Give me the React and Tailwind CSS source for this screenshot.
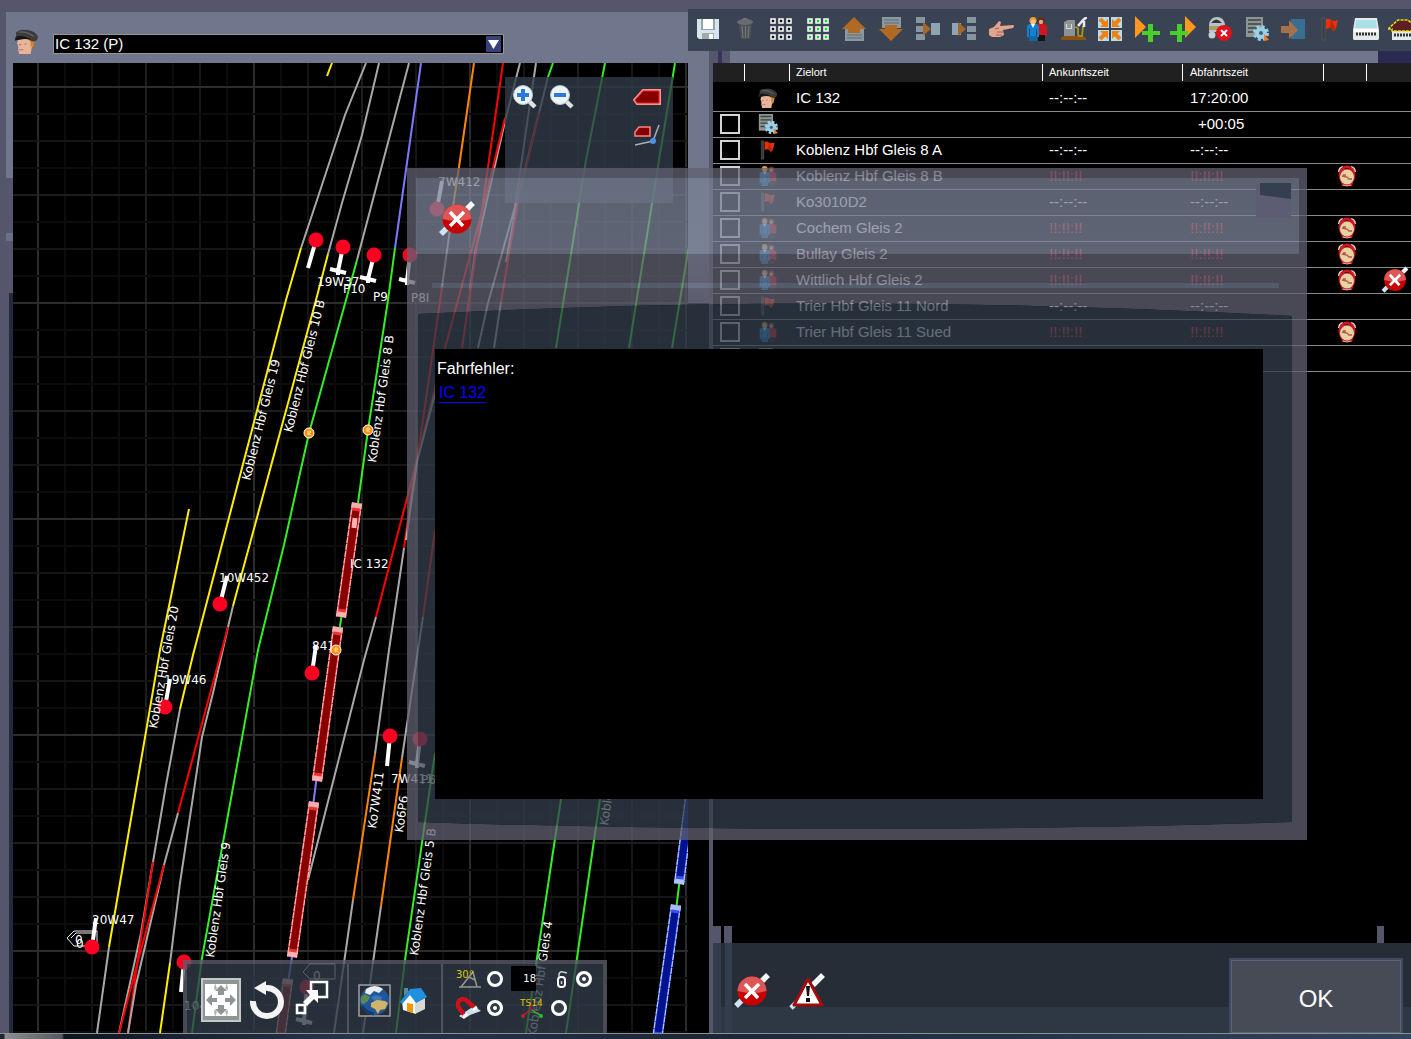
import { useState } from 'react';

const GREEN = '#33ee22';
const GRAY = '#a8a8a8';
const YELLOW = '#ffee00';
const RED = '#ff0000';
const ORANGE = '#ff8400';
const BLUE = '#7b7bff';

const TRACKS = [
  [YELLOW, '332,63 327,76'],
  [GRAY, '366,63 345,115 317,200 301,248'],
  [YELLOW, '301,248 286,300 193,655 180,709'],
  [GRAY, '180,709 166,785 153,862 141,933 119,1033'],
  [RED, '153,862 141,938 136,972 128,1033'],
  [GRAY, '379,63 362,135 342,203 328,254'],
  [YELLOW, '328,254 316,300 233,606'],
  [GRAY, '233,606 228,627 213,693 202,737 180,883 170,963'],
  [YELLOW, '170,963 160,1033'],
  [GRAY, '178,813 164,865 136,985 128,1033'],
  [RED, '228,627 178,813'],
  [RED, '164,865 135,972 119,1033'],
  [GRAY, '409,63 357,260'],
  [GREEN, '357,260 346,300 309,433 284,545 258,650 202,958 192,1033'],
  [BLUE, '421,63 395,248'],
  [GREEN, '395,248 388,300 368,430 358,503 338,640'],
  [BLUE, '317,775 313,806'],
  [BLUE, '293,950 287,990'],
  [ORANGE, '474,63 459,167 454,200'],
  [GRAY, '454,200 442,287'],
  [RED, '442,287 423,420'],
  [GRAY, '520,63 506,117 490,187 475,253 470,290'],
  [RED, '503,63 488,167 477,245 462,348'],
  [RED, '505,118 493,167 481,215 445,348 417,460 376,617'],
  [GRAY, '376,617 364,660 320,833 308,880'],
  [RED, '423,420 412,490 404,548'],
  [GRAY, '436,390 417,462 406,540'],
  [GRAY, '404,548 389,650 375,754'],
  [ORANGE, '375,754 353,900'],
  [GRAY, '353,900 334,1033'],
  [RED, '435,530 423,617'],
  [GRAY, '423,617 418,650 402,758'],
  [ORANGE, '402,758 381,906'],
  [GRAY, '381,906 363,1033'],
  [GRAY, '536,63 528,117 515,207 488,303 478,348'],
  [GREEN, '553,63 548,77'],
  [GRAY, '548,77 539,113 528,157 516,207 506,262'],
  [RED, '539,113 528,160 517,207 501,302'],
  [GRAY, '501,302 494,348'],
  [GREEN, '605,63 586,160 556,348'],
  [GREEN, '675,63 659,160 629,348'],
  [GREEN, '690,240 672,348'],
  [GREEN, '561,799 537,958 526,1033'],
  [GREEN, '600,799 577,958 566,1033'],
  [GREEN, '435,753 405,960 396,1033'],
  [YELLOW, '189,509 160,650 109,947'],
  [GRAY, '109,947 97,1033'],
  [GREEN, '680,878 676,910'],
];

const CARS = [
  [357, 503, 341, 617, 'red'],
  [338, 627, 317, 781, 'red'],
  [314, 802, 292, 957, 'red'],
  [288, 979, 280, 1040, 'red'],
  [691, 790, 679, 884, 'blue'],
  [676, 905, 657, 1040, 'blue'],
];

// x, y of the lamp, x, y of the mast foot, crossbar
const SIGNALS = [
  [316, 240, 308, 268, false],
  [343, 247, 338, 271, true],
  [374, 255, 368, 279, true],
  [410, 255, 407, 281, true],
  [437, 209, 442, 181, false],
  [220, 604, 227, 576, false],
  [312, 673, 316, 645, false],
  [165, 707, 170, 679, false],
  [92, 947, 96, 918, false],
  [390, 736, 387, 766, false],
  [420, 739, 417, 764, true],
  [184, 962, 181, 992, false],
  [307, 987, 304, 1021, true],
];

const LABELS = [
  ['19W37', 317, 286, 0],
  ['P10', 343, 293, 0],
  ['P9', 373, 301, 0],
  ['P8I', 411, 302, 0],
  ['7W412', 438, 186, 0],
  ['IC 132', 350, 568, 0],
  ['10W452', 219, 582, 0],
  ['841', 312, 650, 0],
  ['19W46', 164, 684, 0],
  ['20W47', 92, 924, 0],
  ['7W411', 391, 783, 0],
  ['P6', 421, 784, 0],
  ['1045', 184, 1010, 0],
  ['Koblenz Hbf Gleis 19', 250, 481, -76],
  ['Koblenz Hbf Gleis 10 B', 292, 433, -76],
  ['Koblenz Hbf Gleis 8 B', 376, 463, -82],
  ['Koblenz Hbf Gleis 20', 157, 729, -80],
  ['Koblenz Hbf Gleis 9', 214, 958, -82],
  ['Koblenz Hbf Gleis 5 B', 418, 956, -82],
  ['Ko7W411', 376, 829, -82],
  ['Ko6P6', 403, 833, -82],
  ['Koblenz Hbf Gleis 4', 536, 1037, -82],
  ['Koblenz Hbf Gleis 3', 608, 826, -82],
];

const STOPS = [
  { icon: 'driver', name: 'IC 132', arr: '--:--:--', dep: '17:20:00', head: true },
  { icon: 'task', name: '', arr: '', dep: '+00:05', indent: true },
  { icon: 'flag', name: 'Koblenz Hbf Gleis 8 A', arr: '--:--:--', dep: '--:--:--' },
  { icon: 'people', name: 'Koblenz Hbf Gleis 8 B', arr: '!!:!!:!!', dep: '!!:!!:!!', alarm: true },
  { icon: 'flag', name: 'Ko3010D2', arr: '--:--:--', dep: '--:--:--' },
  { icon: 'people', name: 'Cochem Gleis 2', arr: '!!:!!:!!', dep: '!!:!!:!!', alarm: true },
  { icon: 'people', name: 'Bullay Gleis 2', arr: '!!:!!:!!', dep: '!!:!!:!!', alarm: true },
  { icon: 'people', name: 'Wittlich Hbf Gleis 2', arr: '!!:!!:!!', dep: '!!:!!:!!', alarm: true, error: true },
  { icon: 'flag', name: 'Trier Hbf Gleis 11 Nord', arr: '--:--:--', dep: '--:--:--' },
  { icon: 'people', name: 'Trier Hbf Gleis 11 Sued', arr: '!!:!!:!!', dep: '!!:!!:!!', alarm: true },
  { icon: 'task', name: '', arr: '', dep: '' },
];

function DriverIcon({ className = 'size-6' }) {
  return (
    <svg className={className} viewBox="0 0 24 24">
      <path d="M12 9l8 3-1 5-3 3z" fill="#b87410" />
      <path d="M4 9l-1 5 1 2v4l1 4h11l1-6 2-4-1-5-6-2z" fill="#e8b49a" />
      <path d="M14 10l2 3v5l2-3 2-3-1-2z" fill="#c98322" />
      <path d="M5 15h2M10 15l2-1M5 20h4" stroke="#b57a62" strokeWidth="1" />
      <path d="M2 3Q6 0 13 1t10 6q0 5-5 5-5-4-11-3L1 11q-1-2 1-4z" fill="#3c3c3c" />
      <path d="M3 7q8-1 14 4-6-2-10-1L1 11q0-2 2-4z" fill="#161616" />
      <path d="M5 3q7-1 14 4" stroke="#6a6a6a" fill="none" />
    </svg>
  );
}

function FlagIcon({ className = 'size-6' }) {
  return (
    <svg className={className} viewBox="0 0 24 24">
      <path d="M4 1h3v22H4z" fill="#3c3c3c" stroke="#606060" strokeWidth=".6" />
      <path d="M8 2q3-1 5 1t7 0l-2 8q-1 3-3 3-2-4-4-3l-3 1z" fill="#e8300a" />
      <path d="M13 3l-1 8q2 0 3 3l2-3z" fill="#b82406" />
    </svg>
  );
}

function PeopleIcon({ className = 'size-6' }) {
  return (
    <svg className={className} viewBox="0 0 24 24">
      <circle cx="16" cy="4" r="3.500" fill="#6b2a10" />
      <circle cx="16" cy="5" r="2.200" fill="#e2a583" />
      <path d="M11 7h8l3 2v10h-11z" fill="#d01420" />
      <path d="M13 18h7v6h-7z" fill="#151515" />
      <circle cx="8" cy="3.500" r="3.500" fill="#f0a028" />
      <circle cx="8" cy="5" r="2.500" fill="#f2c19c" />
      <path d="M4 7h8l2 2v11H2V9z" fill="#1680cc" />
      <path d="M6 7l2 4 2-4z" fill="#fff" />
      <path d="M4 19h8v5H4z" fill="#1268a8" />
      <path d="M4.500 12v7M11.500 12v7" stroke="#0a5288" />
    </svg>
  );
}

function TaskIcon({ className = 'size-6' }) {
  return (
    <svg className={className} viewBox="0 0 24 24">
      <path d="M1 0h17v20H1z" fill="#8d9593" />
      <path d="M3 3h13M3 7h13M3 11h10M3 15h6" stroke="#3b4444" strokeWidth="1.600" />
      <circle cx="16" cy="16" r="6" fill="#9bd0e6" />
      <circle cx="16" cy="16" r="6" fill="none" stroke="#9bd0e6" strokeWidth="4" strokeDasharray="2.700 2" />
      <circle cx="16" cy="16" r="2" fill="#47626e" />
      <path d="M19 17l5 6-5 1z" fill="#f08020" />
    </svg>
  );
}

const ROW_ICONS = { driver: DriverIcon, task: TaskIcon, flag: FlagIcon, people: PeopleIcon };

function AlarmIcon() {
  return (
    <svg className="ml-[14px] h-[22px] w-5" viewBox="0 0 20 22">
      <path d="M2 7q0-4 4-5M18 7q0-4-4-5" stroke="#d8d0d0" strokeWidth="2" fill="none" />
      <path d="M3 14l2 7h10l2-7z" fill="#c81820" />
      <ellipse cx="10" cy="10" rx="8.500" ry="9.500" fill="#d01820" />
      <path d="M7 4q3-2 6 0z" fill="#401010" />
      <ellipse cx="10" cy="12" rx="7" ry="7.600" fill="#e6d2a2" />
      <path d="M5 11l5 1 2 2h3M6 10h3" stroke="#b0584a" strokeWidth="1.300" fill="none" />
      <path d="M6 20q4 2 8 0" stroke="#e6b0a0" fill="none" />
    </svg>
  );
}

function ErrorIcon({ className = 'size-10' }) {
  return (
    <svg className={className} viewBox="0 0 40 40">
      <path d="M4 35l8-8" stroke="#cfe4f0" strokeWidth="5.500" />
      <path d="M28 12l8-8" stroke="#f4f6f7" strokeWidth="5.500" />
      <circle cx="20" cy="20" r="14.500" fill="#c80000" />
      <path d="M5.500 20a14.500 14.500 0 0 1 29 0q-14 4-29 0z" fill="#dd5555" />
      <path d="M13 13l13 14M27 13L13 27" stroke="#fff" strokeWidth="3.500" />
    </svg>
  );
}

function WarnIcon() {
  return (
    <svg className="size-10" viewBox="0 0 40 40">
      <path d="M3 37l6-6" stroke="#cfe4f0" strokeWidth="5" />
      <path d="M25 14L35 4" stroke="#f4f6f7" strokeWidth="5.500" />
      <path d="M20 8L34 34H6z" fill="#fff" stroke="#a00c0c" strokeWidth="3" strokeLinejoin="round" />
      <path d="M18 15h4l-1 10h-2zM18 27h4v4h-4z" fill="#111" />
    </svg>
  );
}

const CELLS = [1, 9, 17];

function GridIcon({ fill }) {
  return (
    <svg className="size-6" viewBox="0 0 24 24">
      {CELLS.map((y) =>
        CELLS.map((x) => (
          <rect key={`${x}-${y}`} x={x + 1} y={y + 1} width="4" height="4" fill={fill} stroke="#f4f4f4" strokeWidth="1.600" />
        ))
      )}
    </svg>
  );
}

const TOOLS = [
  ['Speichern', <svg className="size-6" viewBox="0 0 24 24"><path d="M1 2h22v20H3l-2-2z" fill="#d5e6ee" /><path d="M5 2h14v11H5z" fill="#9aa4a8" /><path d="M7 2h10v10H7z" fill="#fff" /><path d="M6 16h12v6H6z" fill="#a2a9ac" /><path d="M13 17h4v5h-4z" fill="#fff" /></svg>],
  ['Löschen', <svg className="size-6" viewBox="0 0 24 24"><path d="M6 6h13l-1 15q-6 3-11 0z" fill="#4b4f53" /><ellipse cx="12" cy="5" rx="8" ry="3" fill="#686c70" /><path d="M9 3q3-3 6 0" stroke="#777" fill="none" strokeWidth="1.500" /><path d="M9 9l1 12M12.500 9v12M16 9l-1 12" stroke="#73787c" strokeWidth="1.200" /></svg>],
  ['Alle abwählen', <GridIcon fill="#111" />],
  ['Alle auswählen', <GridIcon fill="#00e020" />],
  ['Nach oben', <svg className="size-6" viewBox="0 0 24 24"><path d="M3 12h19v12H3z" fill="#8b98a2" /><path d="M5 18h15M5 21h15" stroke="#5f6c76" /><path d="M12 0l12 12h-6v4H6v-4H0z" fill="#b06a22" /></svg>],
  ['Nach unten', <svg className="size-6" viewBox="0 0 24 24"><path d="M3 0h19v11H3z" fill="#8b98a2" /><path d="M5 3h15M5 6h15" stroke="#5f6c76" /><path d="M12 24L0 12h6V8h12v4h6z" fill="#b06a22" /></svg>],
  ['Zusammenfassen', <svg className="size-6" viewBox="0 0 24 24"><path d="M0 0h9v6H0zM0 9h9v6H0zM0 17h9v6H0z" fill="#8795a1" /><path d="M15 6h9v12h-9z" fill="#8fa4b2" /><path d="M7 5l8 7-8 7z" fill="#a5662a" /></svg>],
  ['Aufteilen', <svg className="size-6" viewBox="0 0 24 24"><path d="M15 0h9v6h-9zM15 9h9v6h-9zM15 17h9v6h-9z" fill="#8795a1" /><path d="M0 6h9v12H0z" fill="#8fa4b2" /><path d="M6 5l8 7-8 7z" fill="#a5662a" /></svg>],
  ['Ziel zeigen', <svg className="h-6 w-[26px]" viewBox="0 0 26 24"><path d="M1 12l5-2 5-6 2 1-1 4 13-1q2 1 0 3l-10 2 1 5-4 2H4l-3-2z" fill="#e2a58e" /><path d="M9 15h6M8 18h6M7 12l4-1" stroke="#a8604c" /></svg>],
  ['Fahrgäste', <PeopleIcon />],
  ['Tanken', <svg className="h-6 w-[26px]" viewBox="0 0 26 24"><path d="M3 5l4-2h7v17H3z" fill="#8d9294" /><path d="M5 7h6v5H5z" fill="#d8dcdc" /><path d="M6 8h4M6 10h4" stroke="#555" /><path d="M0 21l3-2h19l3 2v2H0z" fill="#8a5410" /><path d="M14 10q4 0 3 5t4 4l1-10" stroke="#b39a12" strokeWidth="1.700" fill="none" /><path d="M17 9l5-6M22 3l4-3M23 4v6" stroke="#e8edf0" strokeWidth="2.500" /></svg>],
  ['Vollbild', <svg className="size-6" viewBox="0 0 24 24"><path d="M0 0h11v11H0zM13 0h11v11H13zM0 13h11v11H0zM13 13h11v11H13z" fill="#b9dce8" /><path d="M2 2l6 6M22 2l-6 6M2 22l6-6M22 22l-6-6" stroke="#f08010" strokeWidth="4" /><path d="M10 2v8H2zM14 2v8h8zM10 22v-8H2zM14 22v-8h8z" fill="#f08010" /></svg>],
  ['Danach einfügen', <svg className="h-[26px] w-[26px]" viewBox="0 0 26 26"><path d="M1 0l11 11L1 22z" fill="#ff981c" /><path d="M14 8h5v7h7v4h-7v7h-5v-7H8v-4h6z" fill="#48cf28" /></svg>],
  ['Davor einfügen', <svg className="h-[26px] w-[26px]" viewBox="0 0 26 26"><path d="M15 0l11 11-11 11z" fill="#ff981c" /><path d="M7 8h5v7h6v4h-6v7H7v-7H0v-4h7z" fill="#48cf28" /></svg>],
  ['Signal sperren', <svg className="h-6 w-[26px]" viewBox="0 0 26 24"><path d="M2 8q1-8 8-8t8 8v7H2z" fill="#b9c4ca" /><path d="M4 6q5-7 11 0z" fill="#2e383f" /><path d="M2 9h14v4H2z" fill="#a8a060" /><circle cx="5" cy="18" r="3.500" fill="#c5ced4" /><circle cx="17" cy="16" r="8" fill="#e2101c" /><path d="M14 13l6 6M20 13l-6 6" stroke="#fff" strokeWidth="2" /></svg>],
  ['Aufgabe', <TaskIcon />],
  ['Einfahren', <svg className="size-6" viewBox="0 0 24 24"><path d="M10 2h14v20H10z" fill="#386e90" /><path d="M0 9h8V3l9 10-9 9v-6H0z" fill="#a5704a" /></svg>],
  ['Flagge', <FlagIcon />],
  ['Wagen', <svg className="h-6 w-[26px]" viewBox="0 0 26 24"><path d="M2 1h22l2 12v9l-1 1H1l-1-1v-9z" fill="#e5e9ea" /><path d="M3 3h20l1 8H2z" fill="#a9e0e8" /><path d="M1 12h24v3H1z" fill="#fff" /><path d="M3 17h20" stroke="#333" strokeWidth="3" strokeDasharray="2 1" /></svg>],
  ['Depot', <svg className="h-6 w-[30px]" viewBox="0 0 30 24"><path d="M4 13h22v10H4z" fill="#e5e9ea" /><path d="M6 18h18" stroke="#333" strokeWidth="3" strokeDasharray="2 1" /><path d="M0 12L10 3h10l10 9h-4v2H4v-2z" fill="#5c2020" stroke="#e8d818" strokeWidth="1.500" strokeDasharray="3 1" /></svg>],
];

function Car({ car }) {
  const [x1, y1, x2, y2, kind] = car;
  const red = kind === 'red';
  const light = red ? '#ffb0b0' : '#b0c4ff';
  const mid = red ? '#f03030' : '#3050ff';
  const len = Math.hypot(x2 - x1, y2 - y1);
  const angle = (Math.atan2(y2 - y1, x2 - x1) * 180) / Math.PI;
  return (
    <g transform={`translate(${x1} ${y1}) rotate(${angle})`}>
      <rect y="-5" width={len} height="10" fill={mid} />
      <path d={`M0 -4.500H${len}M0 4.500H${len}`} stroke={light} strokeWidth="1.300" strokeDasharray="6 1" />
      <rect x="8" y="-3.500" width={len - 16} height="7" fill={red ? '#860000' : '#00128e'} />
      <rect y="-5" width="5" height="10" fill={red ? '#e8b0b0' : '#b0b8f0'} />
      <rect x={len - 5} y="-5" width="5" height="10" fill={light} />
    </g>
  );
}

function gridColor(i) {
  if (i % 8 === 0) return '#2c2c2c';
  if (i % 4 === 0) return '#1e1e1e';
  return i % 2 === 0 ? '#151515' : '#0c0c0c';
}

function TrackMap() {
  const cols = Array.from({ length: 25 }, (_, i) => i);
  const rows = Array.from({ length: 36 }, (_, i) => i);
  return (
    <svg className="block h-full w-full bg-black" viewBox="13 63 675 970" preserveAspectRatio="xMinYMin slice">
      {cols.map((i) => (
        <path key={i} d={`M${38 + i * 27} 63V1033`} stroke={gridColor(i)} strokeWidth="2" />
      ))}
      {rows.map((i) => (
        <path key={i} d={`M13 ${87 + i * 27}H688`} stroke={gridColor(i)} strokeWidth="2" />
      ))}
      {TRACKS.map(([color, points], i) => (
        <polyline key={i} points={points} fill="none" stroke={color} strokeWidth="2" />
      ))}
      {CARS.map((car, i) => (
        <Car key={i} car={car} />
      ))}
      <path d="M355 518l-1 10" stroke="#ffb0b0" strokeWidth="5" />
      <g fill="none" stroke="#eee">
        <path d="M67 938l7-7h23v15H74zM71 938l5-5h18M303 972l7-8h25v15h-25z" />
      </g>
      {SIGNALS.map(([x, y, fx, fy, bar], i) => (
        <g key={i}>
          <path d={`M${x} ${y}L${fx} ${fy}`} stroke="#fff" strokeWidth="4" />
          {bar && <path d={`M${fx - 8} ${fy - 2}L${fx + 8} ${fy + 2}M${fx} ${fy - 3}v7`} stroke="#fff" strokeWidth="4" />}
          <circle cx={x} cy={y} r="7.500" fill="#ff0022" />
        </g>
      ))}
      <g fill="#fff" fontSize="12" fontFamily="'DejaVu Sans', sans-serif">
        {LABELS.map(([text, x, y, angle]) => (
          <text key={text} transform={`translate(${x} ${y}) rotate(${angle})`}>{text}</text>
        ))}
        <text x="75" y="944">0</text>
        <text x="76" y="948">0</text>
        <text x="313" y="980">0</text>
      </g>
      {[[309, 433], [368, 430], [336, 650]].map(([x, y]) => (
        <g key={x} fill="none" stroke="#fff">
          <circle cx={x} cy={y} r="5" fill="#ff9000" />
          <path d={`M${x - 1} ${y + 2}v-4h2l1 1-1 1h-2l3 2`} stroke="#ffe0b0" />
        </g>
      ))}
    </svg>
  );
}

function ZoomIcon({ plus }) {
  return (
    <svg className="size-6" viewBox="0 0 24 24">
      <path d="M16 16l6 6" stroke="#dfe3e5" strokeWidth="4.500" />
      <circle cx="10" cy="10" r="9.500" fill="#edf5fa" stroke="#b8c4cc" />
      <path d={plus ? 'M8 4h4v4h4v4h-4v4H8v-4H4V8h4z' : 'M4 8h12v4H4z'} fill="#2a7be0" />
    </svg>
  );
}

function MapTools() {
  return (
    <div className="absolute top-[14px] right-[15px] flex h-[126px] w-[168px] items-start justify-between bg-[#313c48]/80 px-2">
      <div className="flex gap-[13px] pt-2">
        <button aria-label="Vergrößern"><ZoomIcon plus /></button>
        <button aria-label="Verkleinern"><ZoomIcon /></button>
      </div>
      <div className="flex flex-col items-center gap-5 pt-3 pr-1">
        <button aria-label="Lok" className="block">
          <svg className="h-4 w-7" viewBox="0 0 28 16">
            <path d="M1 11L10 1h17v14H4z" fill="#860000" stroke="#ff9090" strokeWidth="2" />
            <path d="M2 11L10 2h16v12H4z" fill="none" stroke="#e02020" />
          </svg>
        </button>
        <button aria-label="Lok folgen" className="block">
          <svg className="h-[22px] w-[26px]" viewBox="0 0 26 22">
            <path d="M1 7l4-5h11v9H1z" fill="#860000" stroke="#ff8080" strokeWidth="1.500" />
            <path d="M1 20l18-4 6-16" fill="none" stroke="#a8adb0" strokeWidth="1.500" />
            <circle cx="19" cy="16" r="3" fill="#4c90e8" />
          </svg>
        </button>
      </div>
    </div>
  );
}

function Ring({ name, label, on }) {
  return (
    <input
      type="radio"
      name={name}
      aria-label={label}
      defaultChecked={on}
      className="size-4 appearance-none rounded-full border-3 border-white bg-[#313c48] checked:bg-white checked:shadow-[inset_0_0_0_3px_#313c48]"
    />
  );
}

function MapToolbar() {
  return (
    <div className="absolute bottom-0 left-[170px] flex h-[73px] w-[424px] border-x-4 border-t-4 border-[#5b5b6a]/80 bg-[#313c48]/80 bg-clip-padding text-white">
      <div className="flex w-[162px] items-center gap-[9px] border-r-2 border-[#5b5b6a]/80 pt-[2px] pl-[14px]">
        <button aria-label="Verschieben">
          <svg className="h-[44px] w-10" viewBox="0 0 40 44">
            <path d="M1 1h38v42H1z" fill="#8f9597" stroke="#c4c8c8" strokeWidth="2" />
            <path d="M4 6h32v32H4z" fill="#fff" />
            <path d="M20 7l6 6h-3v4h-6v-4h-3zM20 37l6-6h-3v-4h-6v4h-3zM5 22l6-6v4h5v4h-5v4zM35 22l-6-6v4h-5v4h5v4z" fill="#8f9597" />
            <path d="M14 5l2 6-3 1zM26 5l-2 6 3 1zM14 39l2-6-3-1zM26 39l-2-6 3-1z" fill="#a8adaf" />
          </svg>
        </button>
        <button aria-label="Drehen">
          <svg className="h-[40px] w-[36px]" viewBox="0 0 36 40">
            <path d="M3 21a14 14 0 1 0 13-13" fill="none" stroke="#f4f4f4" strokeWidth="6" />
            <path d="M4 8L16 1v14z" fill="#f4f4f4" />
          </svg>
        </button>
        <button aria-label="Verbinden" className="mb-1">
          <svg className="h-[36px] w-[34px]" viewBox="0 0 34 36">
            <path d="M16 2h16v15H16zM2 25h8v8H2z" fill="none" stroke="#fff" strokeWidth="2.500" />
            <path d="M11 10h12v13l-4-4-7 7-4-4 7-7z" fill="#fff" />
          </svg>
        </button>
      </div>
      <div className="flex w-[94px] items-center gap-2 border-r-2 border-[#5b5b6a]/80 pt-1 pl-[9px]">
        <button aria-label="Welt">
          <svg className="size-[33px]" viewBox="0 0 33 33">
            <path d="M1 1h31v31H1z" fill="#2c2c30" stroke="#9a9fa2" strokeWidth="1.500" />
            <circle cx="16.500" cy="16.500" r="14.500" fill="#20579a" />
            <path d="M8 5q9-6 17 0l-4 4-5-2-4 4-5-2z" fill="#e9edf0" />
            <path d="M3 13l4-3 5 3-2 4-4 3-3-1z" fill="#5a8a50" />
            <path d="M13 13l5-2 6 2-1 4-6 1z" fill="#3d78b4" />
            <path d="M13 19l6-3 8 1 3 2-3 6-5 1-2 4-3-5-4-2z" fill="#d2b468" />
            <path d="M4 22q5 7 12 8" fill="none" stroke="#113a72" strokeWidth="3" />
          </svg>
        </button>
        <button aria-label="Startansicht">
          <svg className="size-7" viewBox="0 0 28 28">
            <path d="M3 14l8-8 6 9v12l-13-4z" fill="#fafaf8" />
            <path d="M16 16l10-5v11l-10 5z" fill="#d8dad8" />
            <path d="M1 15L11 2l11-1 6 9-11 6-6-8-8 9z" fill="#1f90dc" />
            <path d="M5 1h4v4L5 9z" fill="#5b87a5" />
            <path d="M8 16l6 1v9l-6-2z" fill="#f0980c" />
          </svg>
        </button>
      </div>
      <div className="flex flex-1 flex-col gap-[5px] pt-[2px] pl-[13px]">
        <div className="flex items-center">
          <svg className="h-6 w-[26px]" viewBox="0 0 26 24">
            <path d="M3 20h22M5 20L17 5l4 15M13 10l6 3" fill="none" stroke="#97978f" strokeWidth="1.500" />
            <text x="0" y="11" fill="#d8c800" fontSize="10" fontFamily="'DejaVu Sans', sans-serif">30°</text>
          </svg>
          <div className="ml-[5px] flex"><Ring name="angle" label="30 Grad" /></div>
          <input aria-label="Maßstab" defaultValue="18" className="mr-5 ml-2 h-[25px] w-[25px] bg-black text-right font-['DejaVu_Sans',sans-serif] text-[10px]" />
          <svg className="mr-2 h-5 w-3" viewBox="0 0 12 20">
            <rect x="2" y="8" width="7" height="10" rx="3" fill="none" stroke="#fff" strokeWidth="2" />
            <path d="M3 8V5q1-3 4-2l4 1M5.500 12v3" fill="none" stroke="#ccc" strokeWidth="1.500" />
          </svg>
          <Ring name="lock" label="Sperren" on />
        </div>
        <div className="flex items-center">
          <svg className="h-6 w-[26px]" viewBox="0 0 26 24">
            <path d="M3 20l5 3 6-4 11-4-7-5z" fill="#cfe0ea" />
            <path d="M9 20l-6-8a5 5 0 0 1 8-7l8 7" fill="none" stroke="#d01018" strokeWidth="4.500" />
            <path d="M7 21l4-3M17 14l4-3" stroke="#fff" strokeWidth="3" />
          </svg>
          <div className="mr-4 ml-[5px] flex"><Ring name="magnet" label="Fangen" on /></div>
          <svg className="mr-1 h-6 w-[28px]" viewBox="0 0 28 24">
            <path d="M4 20l8-7 10 7M12 13V6" fill="none" stroke="#b02030" strokeWidth="1.500" />
            <path d="M13 14l9 6" stroke="#20c020" strokeWidth="1.500" />
            <circle cx="4" cy="20" r="2" fill="#c02020" />
            <circle cx="22" cy="20" r="2" fill="#20c020" />
            <text x="1" y="10" fill="#d8c800" fontSize="9" fontFamily="'DejaVu Sans', sans-serif">TS14</text>
          </svg>
          <Ring name="ts" label="TS14" />
        </div>
      </div>
    </div>
  );
}

function StopTable() {
  return (
    <table className="w-full table-fixed border-collapse bg-black text-left text-[15px] leading-5 text-white">
      <colgroup>
        <col className="w-[31px]" />
        <col className="w-[45px]" />
        <col className="w-[253px]" />
        <col className="w-[140px]" />
        <col className="w-[141px]" />
        <col className="w-[43px]" />
        <col />
      </colgroup>
      <thead className="bg-[#202020] text-[11px] leading-[19px] [&_th]:h-[19px] [&_th]:p-0 [&_th]:font-normal">
        <tr>
          <th />
          <th><span className="block h-[17px] border-l border-white" /></th>
          <th><span className="block h-[17px] border-l border-white pl-[6px] leading-[17px]">Zielort</span></th>
          <th><span className="block h-[17px] border-l border-white pl-[6px] leading-[17px]">Ankunftszeit</span></th>
          <th><span className="block h-[17px] border-l border-white pl-[7px] leading-[17px]">Abfahrtszeit</span></th>
          <th><span className="block h-[17px] border-l border-white" /></th>
          <th><span className="block h-[17px] border-l border-white" /></th>
        </tr>
      </thead>
      <tbody>
        {STOPS.map((stop, i) => {
          const Icon = ROW_ICONS[stop.icon];
          const late = stop.arr.startsWith('!') ? 'text-[#ff2030]' : '';
          return (
            <tr key={i} className={`border-b border-[#8a8a8a] [&>td]:px-0 [&>td]:pb-0 ${stop.head ? 'h-[29px] [&>td]:pt-1' : 'h-[26px] [&>td]:pt-0'}`}>
              <td>
                {!stop.head && (
                  <input
                    type="checkbox"
                    aria-label={stop.name || 'Aufgabe'}
                    className="ml-[7px] block size-5 appearance-none border-2 border-[#d4d4d4] bg-black checked:bg-white"
                  />
                )}
              </td>
              <td><Icon className="ml-[14px] size-5" /></td>
              <td><span className="pl-[7px]">{stop.name}</span></td>
              <td className={late}><span className="pl-[7px]">{stop.arr}</span></td>
              <td className={late}><span className={stop.indent ? 'pl-4' : 'pl-2'}>{stop.dep}</span></td>
              <td>{stop.alarm && <AlarmIcon />}</td>
              <td>{stop.error && <ErrorIcon className="-my-1 ml-[14px] size-[30px]" />}</td>
            </tr>
          );
        })}
      </tbody>
    </table>
  );
}

function ErrorDialog() {
  return (
    <section role="dialog" aria-label="Fahrfehler" className="absolute top-[168px] right-[104px] left-[407px] flex flex-col pb-[41px]">
      <svg className="absolute inset-0 h-full w-full" viewBox="0 0 900 672" preserveAspectRatio="none" fillOpacity=".76">
        <defs>
          <linearGradient id="head" x1="0" y1="0" x2="0" y2="1">
            <stop offset="0" stopColor="#788093" />
            <stop offset="1" stopColor="#7c8498" />
          </linearGradient>
        </defs>
        <path fillRule="evenodd" fill="#606070" d="M0 0H900V672H0zM9 10V86H892V10zM25 115V120H872V115zM11 146Q450 124 885 148V654Q450 668 11 654z" />
        <path d="M9 10H892V86H9z" fill="url(#head)" />
        <path d="M25 115H872V120H25z" fill="#6f788c" />
        <path d="M11 146Q450 124 885 148V654Q450 668 11 654z" fill="#333f4c" />
      </svg>
      <div className="relative flex h-[181px] items-start justify-between pt-[15px] pr-4 pl-[30px]">
        <ErrorIcon className="mt-4 size-10" />
        <button aria-label="Schließen">
          <svg className="size-[35px]" viewBox="0 0 35 35">
            <path d="M0 0h35v35H0z" fill="#5c5d73" />
            <path d="M4 0h31v16L4 12z" fill="#343f50" />
          </svg>
        </button>
      </div>
      <div className="relative mr-[44px] ml-7 flex h-[450px] flex-col items-start bg-black px-[2px] pt-2 text-base text-white">
        <p>Fahrfehler:</p>
        <a href="#ic132" className="ml-[2px] text-[#0000ff] underline decoration-1 underline-offset-4">IC 132</a>
      </div>
    </section>
  );
}

export default function App() {
  const [train, setTrain] = useState('IC 132 (P)');

  return (
    <div className="relative flex h-screen flex-col overflow-hidden bg-[#55566b] font-['Liberation_Sans',Arial,sans-serif]">
      <div className="flex min-h-0 flex-1">
        {/* Map side */}
        <div className="flex w-[709px] shrink-0 flex-col">
          <div className="h-3 bg-[#55566b]" />
          <header className="ml-[6px] flex h-[51px] items-start gap-[14px] bg-[#70778c] pt-[17px] pl-2">
            <DriverIcon className="size-[25px]" />
            <div className="relative mt-[5px] h-5 w-[451px]">
              <select
                aria-label="Zug"
                value={train}
                onChange={(e) => setTrain(e.target.value)}
                className="block h-5 w-full appearance-none border border-[#9a9490] bg-black pl-px text-[15px] leading-[18px] text-white"
              >
                <option>IC 132 (P)</option>
              </select>
              <svg className="pointer-events-none absolute top-[2px] right-[3px] h-4 w-[15px]" viewBox="0 0 15 16">
                <path d="M0 0h15v16H0z" fill="#38407a" />
                <path d="M2 4h11L7.500 13z" fill="#fff" />
              </svg>
            </div>
          </header>
          <div className="flex min-h-0 flex-1">
            <div className="flex w-[13px] flex-col pl-[6px]">
              <div className="h-[115px] bg-[#70778c]" />
              <div className="mt-[55px] h-2 bg-[#6a7085]" />
              <div className="mt-[52px] ml-[3px] flex-1 bg-[#222b3c]" />
            </div>
            <div className="relative min-w-0 flex-1 overflow-hidden">
              <TrackMap />
              <MapTools />
              <MapToolbar />
            </div>
            <div className="w-[21px] bg-black bg-[linear-gradient(#70778c,#70778c_80%,#55566b)] bg-[length:100%_240px] bg-no-repeat" />
          </div>
        </div>

        {/* Timetable side */}
        <div className="flex min-w-0 flex-1 flex-col border-l-4 border-[#55566b]">
          <div className="flex h-[63px] bg-[linear-gradient(to_right,#55566b_5px,#33335c_5px_9px,#55566b_9px_17px,#70778c_17px_665px,#2a2a52_665px)] pt-[9px] shadow-[inset_0_9px_#55566b]">
            <nav className="-ml-[25px] grid h-[42px] w-[733px] shrink-0 grid-cols-20 items-center justify-items-center bg-[#394353] pb-[2px] pl-[2px]">
              {TOOLS.map(([label, icon]) => (
                <button key={label} aria-label={label} title={label}>{icon}</button>
              ))}
            </nav>
          </div>
          <div className="min-h-0 flex-1 bg-black">
            <StopTable />
          </div>
          <div className="flex h-[17px] justify-between bg-black">
            <div className="w-[19px] border-x-8 border-[#55566b]" />
            <div className="mr-[27px] w-[7px] bg-[#55566b]" />
          </div>
          <footer className="flex h-[90px] justify-between bg-[linear-gradient(to_right,#343d4c_8px,transparent_8px_12px,#343d4c_12px_19px,transparent_19px),linear-gradient(#262d37_64px,#2e3844_64px)] pl-[19px]">
            <div className="flex gap-4 pt-7">
              <button aria-label="Fahrfehler" className="self-start"><ErrorIcon /></button>
              <button aria-label="Warnungen" className="self-start"><WarnIcon /></button>
            </div>
            <button className="mt-[15px] mr-2 w-[174px] border-2 border-b-0 border-[#3f4960] bg-[#474b56] pt-[5px] text-2xl text-white inset-ring inset-ring-[#5a6478]">OK</button>
          </footer>
        </div>
      </div>

      <div className="h-[6px] border-t border-[#8a9098] bg-[linear-gradient(to_right,#1c2430_4px,#8a8c90_5px,#55585e_62px,#10161f_64px,#26344a_25%,#1c2636_50%,#33435c)]" />

      <ErrorDialog />
    </div>
  );
}
